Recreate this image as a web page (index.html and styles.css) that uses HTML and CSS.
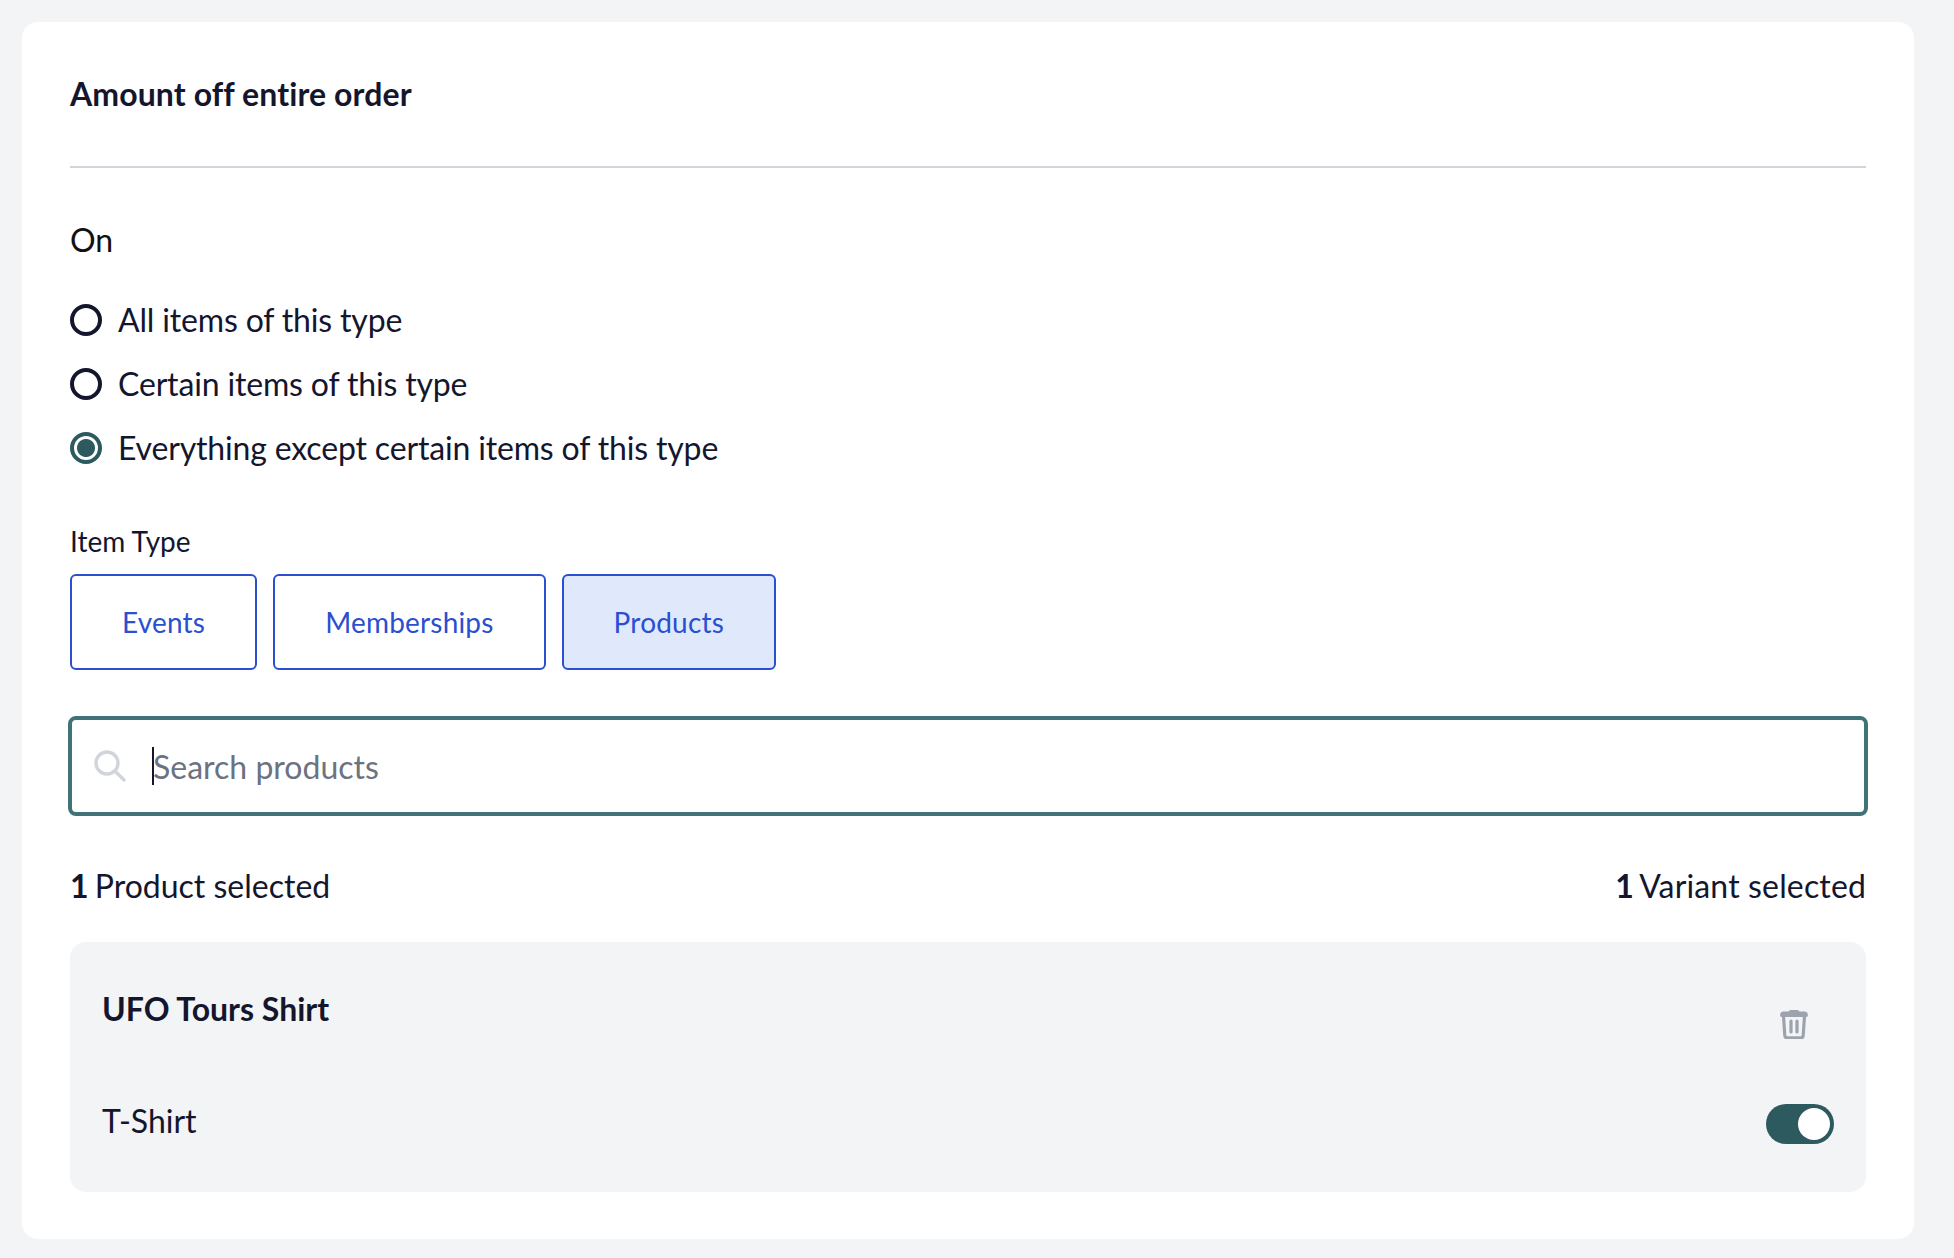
FILE: index.html
```html
<!DOCTYPE html>
<html lang="en">
<head>
<meta charset="utf-8">
<title>Amount off entire order</title>
<link rel="stylesheet" href="styles.css">
</head>
<body>
<main class="card">
  <h1 class="title">Amount off entire order</h1>
  <hr class="rule">
  <p class="on">On</p>
  <div class="radios">
    <div class="radio-row"><span class="radio"></span><span class="radio-text">All items of this type</span></div>
    <div class="radio-row"><span class="radio"></span><span class="radio-text">Certain items of this type</span></div>
    <div class="radio-row"><span class="radio checked"></span><span class="radio-text">Everything except certain items of this type</span></div>
  </div>
  <div class="type-label">Item Type</div>
  <div class="types">
    <div class="type">Events</div>
    <div class="type">Memberships</div>
    <div class="type active">Products</div>
  </div>
  <div class="search">
    <svg class="search-icon" viewBox="0 0 32 32" fill="none" stroke="#d1d5db" stroke-width="3.4" stroke-linecap="round"><circle cx="13" cy="13" r="11"/><path d="M21 21l9 9"/></svg>
    <span class="caret"></span><span class="placeholder">Search products</span>
  </div>
  <div class="counts">
    <div><b>1</b> Product selected</div>
    <div class="count-right"><b>1</b> Variant selected</div>
  </div>
  <section class="panel">
    <div class="panel-head">
      <div class="product">UFO Tours Shirt</div>
      <svg class="trash" viewBox="0 0 28 30" fill="none" stroke="#9ca3af" stroke-width="3.200" stroke-linejoin="round" stroke-linecap="round"><path d="M1.500 6.500c0-1.500.8-2.500 2-2.500h21c1.200 0 2 1 2 2.500z" stroke-width="2.800"/><path d="M10.500 2.500h7" stroke-width="3.200"/><path d="M3.500 7l1.300 19.500c.1 1.500 1 2.300 2.400 2.300h13.600c1.400 0 2.300-.8 2.400-2.300L24.500 7"/><path d="M11 12v11M17 12v11" stroke-width="3.200"/></svg>
    </div>
    <div class="variant">
      <div>T-Shirt</div>
      <span class="toggle"><span class="knob"></span></span>
    </div>
  </section>
</main>
</body>
</html>
```
FILE: styles.css
```css
* { box-sizing: border-box; }
html, body { margin: 0; height: 100%; }
body {
  background: #f3f4f6;
  padding: 22px 40px 19px 22px;
  font-family: Lato, "Liberation Sans", sans-serif;
  font-variant-ligatures: none;
  color: #14162e;
  font-size: 32px;
  line-height: 40px;
}
.card {
  background: #fff;
  border-radius: 16px;
  height: 1217px;
  padding: 52px 48px 48px;
}
.title {
  margin: 0;
  font-size: 32px;
  font-weight: 700;
  line-height: 40px;
  letter-spacing: 0.1px;
}
.rule {
  margin: 52px 0 0;
  border: 0;
  height: 2px;
  background: #d1d5db;
}
.on { margin: 52px 0 0; color: #111; }
.radios { margin-top: 40px; display: flex; flex-direction: column; gap: 24px; }
.radio-row { display: flex; align-items: center; gap: 16px; }
.radio-text { letter-spacing: -0.16px; }
.radio {
  width: 32px;
  height: 32px;
  border-radius: 50%;
  border: 4px solid #14162e;
  background: #fff;
}
.radio.checked {
  border-color: #2d5a5f;
  background: radial-gradient(circle, #2d5a5f 0, #2d5a5f 8.500px, #fff 9.500px);
}
.type-label { margin-top: 55px; font-size: 28px; line-height: 36px; }
.types { display: flex; gap: 16px; margin-top: 15px; }
.type {
  height: 96px;
  padding: 0 50px;
  border: 2px solid #2a4fd0;
  border-radius: 6px;
  color: #2a4fd0;
  font-size: 28px;
  letter-spacing: 0.2px;
  display: flex;
  align-items: center;
}
.type.active { background: #dfe9fb; }
.search {
  margin: 46px -2px 0;
  height: 100px;
  border: 4px solid #3f7378;
  border-radius: 8px;
  display: flex;
  align-items: center;
  padding-left: 22px;
}
.search-icon { width: 32px; height: 32px; }
.caret { width: 2px; height: 38px; background: #14162e; margin-left: 26px; }
.placeholder { color: #6b7280; margin-left: -1px; padding-top: 2px; }
.counts { display: flex; justify-content: space-between; margin-top: 50px; }
.counts b { font-weight: 700; margin-right: -2px; }
.count-right { letter-spacing: 0.15px; }
.panel {
  margin-top: 36px;
  height: 250px;
  background: #f3f4f6;
  border-radius: 16px;
  padding: 47px 32px 0;
}
.panel-head { display: flex; justify-content: space-between; align-items: flex-start; height: 112px; }
.product { font-weight: 700; }
.trash { width: 28px; height: 30px; margin: 20px 26px 0 0; }
.variant { display: flex; justify-content: space-between; align-items: flex-start; }
.toggle {
  width: 68px;
  height: 40px;
  border-radius: 20px;
  background: #2d5a5f;
  padding: 4px;
  display: flex;
  justify-content: flex-end;
  margin-top: 3px;
}
.knob { width: 32px; height: 32px; border-radius: 50%; background: #fff; }
```
